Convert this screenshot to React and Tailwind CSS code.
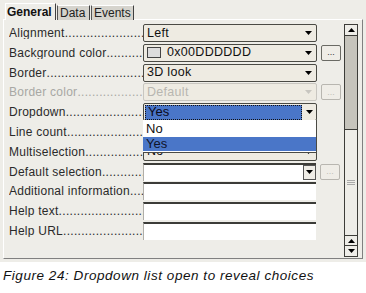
import React from "react";

const Down = ({ color = "#000" }) => (
  <svg width="7" height="4" viewBox="0 0 7 4"><path d="M0 0H7L3.5 4Z" fill={color} /></svg>
);
const Up = ({ color = "#000" }) => (
  <svg width="7" height="4" viewBox="0 0 7 4"><path d="M0 4H7L3.5 0Z" fill={color} /></svg>
);

const DOTS = ".".repeat(80);

function Label({ text, disabled }) {
  return (
    <div className={"w-[134px] flex overflow-hidden whitespace-nowrap text-[12px] tracking-[0.25px] leading-none " + (disabled ? "text-[#a8a8a4]" : "text-[#2a2a2a]")}>
      <span>{text}</span>
      <span className="flex-1 overflow-hidden tracking-[0.3px]">{DOTS}</span>
    </div>
  );
}

function Combo({ children, disabled }) {
  return (
    <div className={"w-[174px] h-[18px] flex items-center rounded-[2px] border bg-[#eeebe2] " + (disabled ? "border-[#c8c6c0]" : "border-[#4a4a44]")}>
      <div className={"flex-1 flex items-center pl-[3px] text-[12.5px] tracking-[0.3px] whitespace-nowrap " + (disabled ? "text-[#b8b6b0]" : "text-[#111]")}>{children}</div>
      <div className="w-[14px] flex justify-center mr-[1px]"><Down color={disabled ? "#c8c6c0" : "#000"} /></div>
    </div>
  );
}

function DotBtn({ disabled }) {
  return (
    <div className={"w-[20px] h-[16px] ml-[4px] rounded-[2px] border flex items-center justify-center text-[9px] leading-none bg-[#efede7] " + (disabled ? "border-[#b8b6b0] text-[#c0beb8]" : "border-[#6a6a64] text-[#333]")}>
      ...
    </div>
  );
}

function TextField() {
  return <div className="w-[173px] h-[18px] bg-white border-t-2 border-t-[#3c3c38] border-l border-l-[#b0aea8]" />;
}

function Row({ label, disabled, children }) {
  return (
    <div className="flex items-center h-[18px]">
      <Label text={label} disabled={disabled} />
      {children}
    </div>
  );
}

export default function App() {
  return (
    <div className="w-[366px] h-[293px] bg-white font-['Liberation_Sans',Arial,sans-serif] overflow-hidden">
      <div className="h-[262px] bg-[#eeede8] pt-[3px] px-[3px]">
        {/* tabs */}
        <div className="h-[17px] flex items-end pl-[2px]">
          <div className="h-[17px] w-[51px] bg-[#eeede8] border-t border-l border-t-white border-l-white border-r border-r-[#404040] flex items-center pl-[1px] text-[12px] font-bold text-[#111] z-10 relative">General</div>
          <div className="h-[15px] w-[33px] ml-[1px] bg-[#d6d4cd] border-t border-l border-t-white border-l-[#555] border-r border-r-[#404040] flex items-center pl-[2px] text-[12px] text-[#222]">Data</div>
          <div className="h-[15px] w-[43px] ml-[1px] bg-[#d6d4cd] border-t border-l border-t-white border-l-[#555] border-r border-r-[#404040] flex items-center pl-[2px] text-[12px] text-[#222]">Events</div>
        </div>
        {/* panel */}
        <div className="h-[240px] w-[360px] border-t border-l border-t-white border-l-white border-r border-b border-r-[#808080] border-b-[#808080] flex pl-[5px] pt-[4px] -mt-[1px]">
          <div className="flex flex-col gap-[1.8px]">
            <Row label="Alignment"><Combo>Left</Combo></Row>
            <Row label="Background color">
              <Combo>
                <span className="w-[14px] h-[11px] border border-[#444] bg-[#dddddd] mr-[6px]" />0x00DDDDDD
              </Combo>
              <DotBtn />
            </Row>
            <Row label="Border"><Combo>3D look</Combo></Row>
            <Row label="Border color" disabled>
              <Combo disabled>Default</Combo>
              <DotBtn disabled />
            </Row>
            <Row label="Dropdown">
              <div className="relative w-[174px] h-[18px] flex items-center rounded-[2px] border border-[#4a4a44] bg-[#eeebe2] z-20">
                <div className="flex-1 h-[15px] ml-[1px] bg-[#4a76c8] border border-dotted border-[#111] flex items-center pl-[2px] text-[13px] text-[#0a0a1a]">Yes</div>
                <div className="w-[14px] flex justify-center"><Down /></div>
                <div className="absolute left-[-1px] top-[16px] w-[174px] h-[33px] bg-white border-r border-b border-[#4a4a44] flex flex-col">
                  <div className="h-[17px] flex items-center pl-[3px] text-[13px] text-[#111]">No</div>
                  <div className="h-[14px] bg-[#4a76c8] flex items-center pl-[3px] text-[13px] text-[#10142a]">Yes</div>
                </div>
              </div>
            </Row>
            <Row label="Line count"><Combo>1</Combo></Row>
            <Row label="Multiselection"><Combo>No</Combo></Row>
            <Row label="Default selection">
              <div className="w-[173px] h-[18px] bg-white border-t-2 border-t-[#3c3c38] border-l border-l-[#b0aea8] flex justify-end">
                <div className="w-[13px] h-[15px] border border-[#555] bg-[#efede7] flex items-center justify-center"><Down /></div>
              </div>
              <DotBtn disabled />
            </Row>
            <Row label="Additional information"><TextField /></Row>
            <Row label="Help text"><TextField /></Row>
            <Row label="Help URL"><TextField /></Row>
          </div>
          {/* scrollbar */}
          <div className="ml-[3px] w-[14px] h-[233px] border border-[#3c3c38] bg-[#c6c4bc] flex flex-col">
            <div className="h-[11px] bg-[#eeede8] border-b border-[#3c3c38] flex items-center justify-center"><Up /></div>
            <div className="flex-1" />
            <div className="h-[107px] bg-[#eeede8] border-t border-b border-[#3c3c38] flex flex-col items-center justify-center gap-[1px]">
              <div className="w-[8px] h-px bg-[#aaa]" />
              <div className="w-[8px] h-px bg-[#aaa]" />
              <div className="w-[8px] h-px bg-[#aaa]" />
            </div>
            <div className="h-[10px] bg-[#eeede8] border-b border-[#3c3c38] flex items-center justify-center"><Up /></div>
            <div className="h-[10px] bg-[#eeede8] flex items-center justify-center"><Down /></div>
          </div>
        </div>
      </div>
      <div className="pl-[3px] pt-[7px] text-[13.5px] italic text-[#111] leading-none tracking-[0.55px] whitespace-nowrap">
        Figure 24: Dropdown list open to reveal choices
      </div>
    </div>
  );
}
